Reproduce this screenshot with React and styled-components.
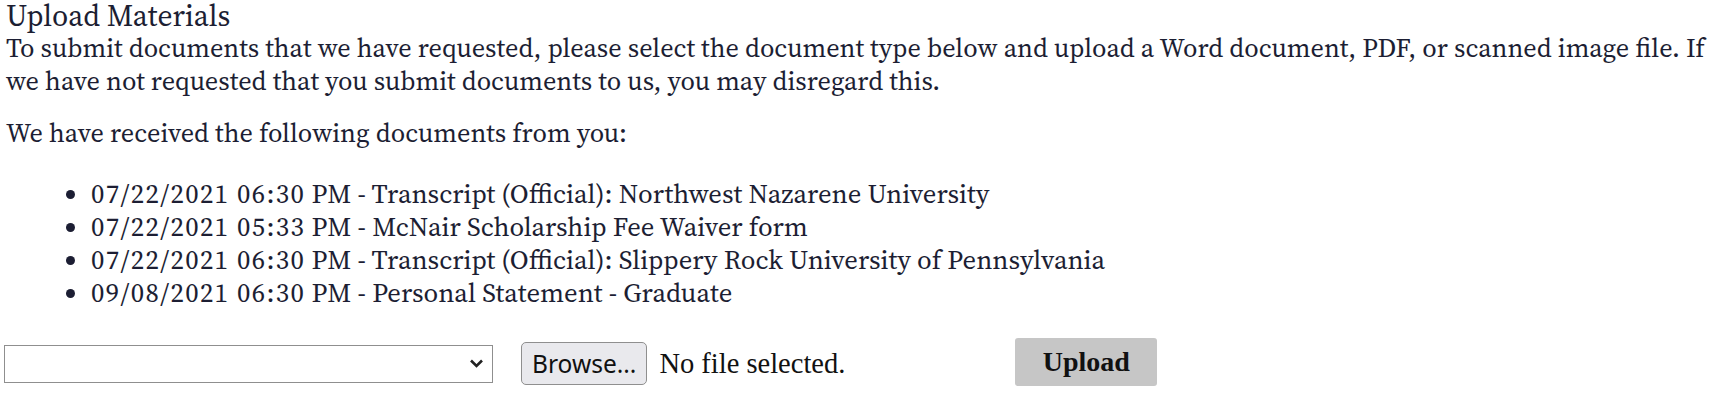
import React, { useState } from 'react';
import styled, { createGlobalStyle } from 'styled-components';

const GlobalStyle = createGlobalStyle`
  html, body {
    margin: 0;
    padding: 0;
    background: #ffffff;
  }
  body {
    font-family: "Source Serif 4", "Noto Serif", "Liberation Serif", serif;
    color: #1c1e33;
  }
`;

const documents = [
  { stamp: '07/22/2021 06:30', rest: ' PM - Transcript (Official): Northwest Nazarene University' },
  { stamp: '07/22/2021 05:33', rest: ' PM - McNair Scholarship Fee Waiver form' },
  { stamp: '07/22/2021 06:30', rest: ' PM - Transcript (Official): Slippery Rock University of Pennsylvania' },
  { stamp: '09/08/2021 06:30', rest: ' PM - Personal Statement - Graduate' },
];

const Panel = styled.section`
  padding: 0 6px;
`;

const Title = styled.div`
  font-size: 29.5px;
  line-height: 32px;
`;

const Text = styled.p`
  margin: ${(p) => p.$margin || '0'};
  font-size: 26.3px;
  line-height: 33px;
`;

const DocList = styled.ul`
  margin: 27px 0 0;
  padding-left: 85px;
  font-size: 26.7px;
  line-height: 33px;
  list-style: disc;
`;

// the dates in the reference use wider figures than Source Serif 4
const Stamp = styled.span`
  letter-spacing: 1.4px;
`;

const UploadRow = styled.form`
  display: flex;
  align-items: center;
  margin-top: 32px;
  margin-left: -2px;
`;

const SelectWrap = styled.div`
  position: relative;
  width: 489px;
  height: 38px;
`;

const TypeSelect = styled.select`
  appearance: none;
  width: 100%;
  height: 100%;
  margin: 0;
  border: 1px solid #8f8f8f;
  border-radius: 0;
  background: #ffffff;
  font-family: "Noto Sans", sans-serif;
  font-size: 20px;
  color: #111;
  padding: 0 40px 0 8px;
`;

const Chevron = styled.svg`
  position: absolute;
  right: 9px;
  top: 13px;
  width: 15px;
  height: 11px;
  pointer-events: none;
`;

const BrowseButton = styled.button`
  margin-left: 28px;
  height: 43px;
  padding: 0 10px;
  border: 1px solid #8f8f8f;
  border-radius: 5px;
  background: #e9e9ed;
  font-family: "Noto Sans", "Open Sans", sans-serif;
  font-size: 24.5px;
  color: #111;
  cursor: pointer;
`;

const FileName = styled.span`
  margin-left: 12px;
  font-family: "Liberation Serif", serif;
  font-size: 28.5px;
  color: #111;
`;

const SubmitButton = styled.button`
  margin-left: 170px;
  align-self: flex-start;
  margin-top: -3px;
  width: 142px;
  height: 48px;
  border: none;
  border-radius: 3px;
  background: #c6c6c6;
  font-family: "Liberation Serif", serif;
  font-weight: bold;
  font-size: 28px;
  color: #111;
  cursor: pointer;
`;

export default function App() {
  const [docType, setDocType] = useState('');

  return (
    <Panel>
      <GlobalStyle />
      <Title>Upload Materials</Title>
      <Text>
        To submit documents that we have requested, please select the document type below and
        upload a Word document, PDF, or scanned image file. If we have not requested that you
        submit documents to us, you may disregard this.
      </Text>
      <Text $margin="19px 0 0">We have received the following documents from you:</Text>
      <DocList>
        {documents.map((d, i) => (
          <li key={i}>
            <Stamp>{d.stamp}</Stamp>
            {d.rest}
          </li>
        ))}
      </DocList>
      <UploadRow onSubmit={(e) => e.preventDefault()}>
        <SelectWrap>
          <TypeSelect value={docType} onChange={(e) => setDocType(e.target.value)}>
            <option value="" />
            <option value="transcript">Transcript (Official)</option>
            <option value="statement">Personal Statement</option>
          </TypeSelect>
          <Chevron viewBox="0 0 15 11">
            <path d="M2 2.5 L7.5 8 L13 2.5" fill="none" stroke="#222" strokeWidth="2.6" />
          </Chevron>
        </SelectWrap>
        <BrowseButton type="button">Browse...</BrowseButton>
        <FileName>No file selected.</FileName>
        <SubmitButton type="submit">Upload</SubmitButton>
      </UploadRow>
    </Panel>
  );
}
